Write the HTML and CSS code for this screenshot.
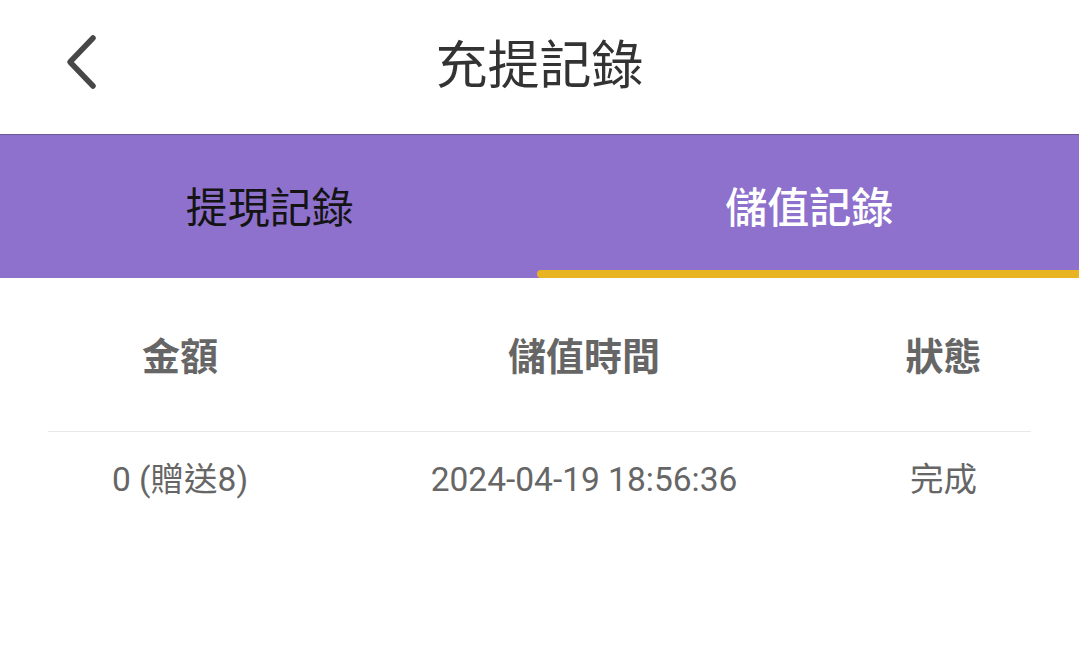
FILE: index.html
```html
<!DOCTYPE html>
<html lang="zh-Hant">
<head>
<meta charset="utf-8">
<title>充提記錄</title>
<link rel="stylesheet" href="styles.css">
</head>
<body>
<header class="topbar">
  <button class="back" aria-label="返回">
    <svg width="40" height="60" viewBox="0 0 40 60"><path d="M29 4 L6 28 L29 52" fill="none" stroke="#474747" stroke-width="5.5" stroke-linecap="round" stroke-linejoin="round"/></svg>
  </button>
  <h1 class="title">充提記錄</h1>
</header>
<nav class="tabs">
  <div class="tab">提現記錄</div>
  <div class="tab active">儲值記錄</div>
</nav>
<section class="table">
  <div class="row head">
    <div>金額</div>
    <div>儲值時間</div>
    <div>狀態</div>
  </div>
  <div class="row body">
    <div>0 (贈送8)</div>
    <div>2024-04-19 18:56:36</div>
    <div>完成</div>
  </div>
</section>
</body>
</html>
```
FILE: styles.css
```css
* { box-sizing: border-box; }
html, body { margin: 0; padding: 0; background: #fff; }
body {
  font-family: Roboto, "Noto Sans CJK TC", "Noto Sans", sans-serif;
  width: 1079px;
  height: 668px;
  overflow: hidden;
}
.topbar {
  position: relative;
  height: 135px;
  display: flex;
  align-items: center;
  justify-content: center;
  border-bottom: 1px solid #6c5a94;
  background: #fff;
}
.back {
  position: absolute;
  left: 64px;
  top: 34px;
  padding: 0;
  border: 0;
  background: none;
  line-height: 0;
}
.title {
  margin: 0 0 12px;
  font-family: "Noto Sans CJK TC", sans-serif;
  font-weight: 400;
  font-size: 52px;
  color: #333;
  letter-spacing: 0;
}
.tabs {
  display: flex;
  height: 143px;
  background: #8e71cd;
}
.tab {
  flex: 1;
  position: relative;
  display: flex;
  align-items: center;
  justify-content: center;
  padding-bottom: 4px;
  font-family: "Noto Sans CJK TC", sans-serif;
  font-size: 42px;
  color: #141414;
}
.tab.active {
  color: #fff;
  font-weight: 500;
}
.tab.active::after {
  content: "";
  position: absolute;
  left: -3px;
  right: -6px;
  bottom: 0;
  height: 8px;
  border-radius: 4px;
  background: #e9b422;
}
.table {
  padding: 0 48px;
}
.row {
  display: grid;
  grid-template-columns: 264px 544px 175px;
  text-align: center;
  color: #666;
}
.row.head {
  height: 154px;
  align-items: center;
  padding-bottom: 2px;
  font-size: 38px;
  font-weight: 700;
  border-bottom: 1px solid #e8e8e8;
  font-family: "Noto Sans CJK TC", sans-serif;
}
.row.body {
  padding-top: 28px;
  font-size: 33.5px;
  line-height: 40px;
}
```
